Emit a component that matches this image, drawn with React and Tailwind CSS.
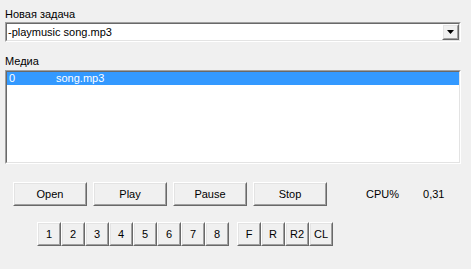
import React from "react";

const font = { fontFamily: '"Liberation Sans", Arial, sans-serif' };

function Raised({ className = "", children }) {
  return (
    <div className={`shrink-0 border border-t-white border-l-white border-b-[#696969] border-r-[#696969] bg-[#f0f0f0] ${className}`}>
      <div className="w-full h-full flex items-center justify-center border border-t-[#e3e3e3] border-l-[#e3e3e3] border-b-[#a0a0a0] border-r-[#a0a0a0]">
        {children}
      </div>
    </div>
  );
}

function Sunken({ className = "", children }) {
  return (
    <div className={`shrink-0 border border-t-[#a0a0a0] border-l-[#a0a0a0] border-b-white border-r-white ${className}`}>
      <div className="w-full h-full border border-t-[#696969] border-l-[#696969] border-b-[#e3e3e3] border-r-[#e3e3e3] bg-white">
        {children}
      </div>
    </div>
  );
}

export default function App() {
  const nums = ["1", "2", "3", "4", "5", "6", "7", "8"];
  const extra = ["F", "R", "R2", "CL"];

  return (
    <div
      className="w-[471px] h-[269px] bg-[#f0f0f0] text-[11px] text-black overflow-hidden flex flex-col"
      style={font}
    >
      {/* task */}
      <div className="shrink-0 pl-[5px] pt-[8px] leading-[13px] h-[22px]">Новая задача</div>
      <Sunken className="ml-[5px] w-[456px] h-[20px]">
        <div className="flex h-full items-center">
          <div className="flex-1 pl-[1px] leading-[13px]">-playmusic song.mp3</div>
          <Raised className="w-[17px] h-[16px]">
            <svg width="7" height="4" viewBox="0 0 7 4">
              <path d="M0 0h7L3.5 4z" fill="#000" />
            </svg>
          </Raised>
        </div>
      </Sunken>

      {/* media */}
      <div className="shrink-0 pl-[5px] pt-[13px] leading-[13px] h-[28px]">Медиа</div>
      <Sunken className="ml-[5px] w-[456px] h-[94px]">
        <div className="flex items-center h-[13px] bg-[#3399ff] text-white leading-[13px]">
          <span className="pl-[2px] w-[49px]">0</span>
          <span>song.mp3</span>
        </div>
      </Sunken>

      {/* main buttons */}
      <div className="shrink-0 flex items-center mt-[18px] pl-[13px] h-[24px]">
        <div className="flex gap-[6px]">
          {["Open", "Play", "Pause", "Stop"].map((t) => (
            <Raised key={t} className="w-[74px] h-[24px]">{t}</Raised>
          ))}
        </div>
        <span className="ml-[39px]">CPU%</span>
        <span className="ml-[24px]">0,31</span>
      </div>

      {/* number buttons */}
      <div className="shrink-0 flex mt-[16px] pl-[37px]">
        <div className="flex">
          {nums.map((n) => (
            <Raised key={n} className="w-[24px] h-[24px]">{n}</Raised>
          ))}
        </div>
        <div className="flex ml-[8px]">
          {extra.map((n) => (
            <Raised key={n} className="w-[24px] h-[24px]">{n}</Raised>
          ))}
        </div>
      </div>
    </div>
  );
}
